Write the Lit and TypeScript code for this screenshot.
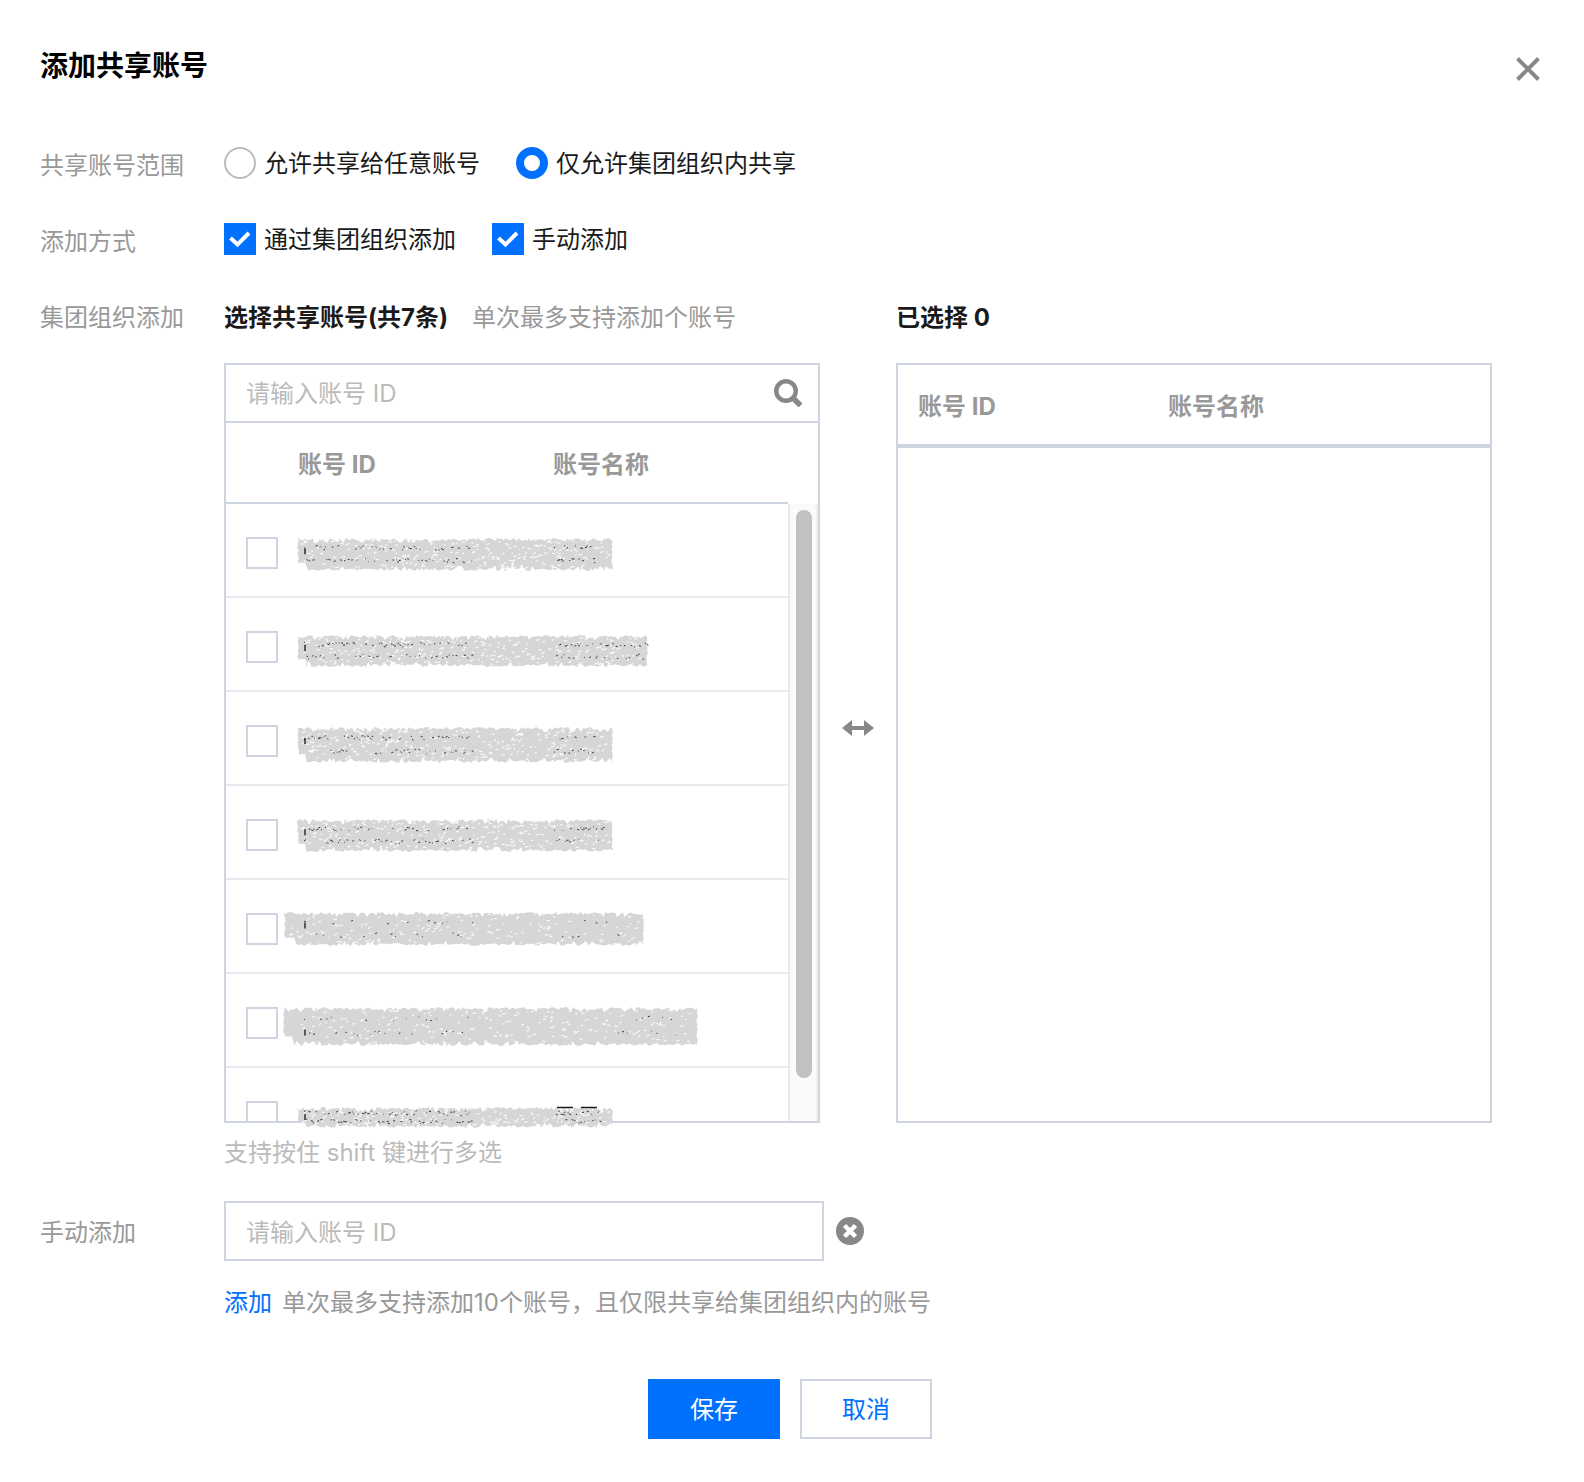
import { LitElement, html, css, svg } from "lit";
import { customElement } from "lit/decorators.js";

interface Smear {
  x: number;
  y: number;
  w: number;
  h: number;
  notch: number;
  nameFrom: number;
  nameTo: number;
  dark: number;
}

/* Geometry of the redaction strokes, relative to the source panel. */
const SMEARS: Smear[] = [
  { x: 73, y: 175, w: 316, h: 33, notch: 9, nameFrom: 330, nameTo: 372, dark: 1 },
  { x: 73, y: 272, w: 351, h: 32, notch: 9, nameFrom: 332, nameTo: 424, dark: 1 },
  { x: 73, y: 364, w: 316, h: 36, notch: 9, nameFrom: 330, nameTo: 370, dark: 1 },
  { x: 73, y: 456, w: 316, h: 33, notch: 9, nameFrom: 330, nameTo: 380, dark: 1 },
  { x: 60, y: 549, w: 360, h: 34, notch: 11, nameFrom: 338, nameTo: 402, dark: 0.3 },
  { x: 59, y: 644, w: 415, h: 39, notch: 10, nameFrom: 394, nameTo: 454, dark: 0.4 },
  { x: 73, y: 744, w: 316, h: 21, notch: 9, nameFrom: 332, nameTo: 376, dark: 1.2 },
];

function randomizer(seed: number) {
  let s = seed;
  return () => {
    s = (s * 1664525 + 1013904223) % 4294967296;
    return s / 4294967296;
  };
}

function smearOutline(m: Smear, rnd: () => number): string {
  const pts: string[] = [];
  const p = (x: number, y: number) => pts.push(`${x.toFixed(1)} ${y.toFixed(1)}`);
  const right = m.x + m.w;
  const bottom = m.y + m.h;
  const bite = () => (rnd() < 0.08 ? 5 : rnd() * 3);
  for (let x = m.x; x < right; x += 1 + rnd() * 2.5) p(x, m.y + bite());
  for (let y = m.y + 2; y < bottom; y += 2) p(right - rnd() * 1.6, y);
  for (let x = right; x > m.x + m.notch; x -= 1 + rnd() * 2.5) p(x, bottom - bite());
  p(m.x + m.notch - 1, bottom - m.h * 0.25);
  p(m.x + 2, bottom - m.h * 0.24);
  for (let y = bottom - m.h * 0.3; y > m.y; y -= 2) p(m.x + rnd() * 2, y);
  return `M${pts.join("L")}Z`;
}

function flecks(m: Smear, rnd: () => number): string {
  let d = "";
  const count = Math.round((m.w * m.h) / (m.dark < 1 ? 80 : 42));
  for (let i = 0; i < count; i++) {
    const x = m.x + 3 + rnd() * (m.w - 8);
    const y = m.y + 2 + rnd() * (m.h - 4);
    d += `M${x.toFixed(1)} ${y.toFixed(1)}l${(0.4 + rnd() * 2.4).toFixed(1)} ${(0.6 - rnd() * 2).toFixed(1)}`;
  }
  return d;
}

function traces(m: Smear, rnd: () => number): string {
  let d = "";
  const bands: [number, number][] = [
    [80, 248],
    [m.nameFrom, m.nameTo],
  ];
  for (const [from, to] of bands) {
    for (let x = from; x < to; x += (1 + rnd() * 3) / m.dark) {
      const y = m.y + m.h * (rnd() < 0.5 ? 0.3 : 0.68) + (rnd() - 0.5) * 4;
      d += `M${x.toFixed(1)} ${y.toFixed(1)}l${(0.5 + rnd() * 1.6).toFixed(1)} ${((rnd() - 0.5) * 2).toFixed(1)}`;
    }
  }
  return d;
}

const smearArt = SMEARS.map((m, i) => {
  const rnd = randomizer(97 + i * 31);
  const ty = m.y + m.h * (i === 5 ? 0.55 : 0.28);
  return svg`
    <path d=${smearOutline(m, rnd)} fill="#d6d6d6"></path>
    <path d=${flecks(m, rnd)} stroke="#f9f9f9" stroke-width="1.2" stroke-linecap="round"></path>
    <path d=${traces(m, rnd)} stroke="#333" stroke-width="1"></path>
    <path d=${`M81 ${ty + 1}v6`} stroke="#222" stroke-width="1.4"></path>
  `;
});

@customElement("app-root")
export class AppRoot extends LitElement {
  static styles = css`
    :host {
      display: block;
      background: #fff;
      color: #1a1a1a;
      font-family: Inter, "Noto Sans CJK SC", sans-serif;
      font-size: 24px;
      line-height: 36px;
    }
    * {
      box-sizing: border-box;
    }
    button,
    input {
      font: inherit;
      margin: 0;
    }
    .dialog {
      padding: 44px 44px 43px 40px;
    }
    .head {
      display: flex;
      align-items: center;
      justify-content: space-between;
      margin-bottom: 56px;
    }
    .title {
      margin: 0;
      color: #000;
      font-size: 28px;
      line-height: 44px;
      font-weight: 700;
    }
    .icon-button {
      display: flex;
      padding: 0;
      border: 0;
      background: none;
      color: #888;
      cursor: pointer;
    }
    .close {
      padding-top: 6px;
    }
    .icon {
      display: block;
      fill: none;
      stroke: currentColor;
    }
    .row {
      display: grid;
      grid-template-columns: 184px minmax(0, 1fr);
      margin: 0 0 36px;
    }
    .row.wide {
      margin-bottom: 30px;
    }
    .label {
      padding-top: 4px;
      color: #999;
    }
    .label.field {
      padding-top: 14px;
    }
    .options {
      display: flex;
      flex-wrap: wrap;
      gap: 36px;
    }
    .option {
      display: flex;
      align-items: flex-start;
      gap: 8px;
      line-height: 40px;
      cursor: pointer;
    }
    .option input {
      margin-top: 3px;
    }
    .tick,
    .radio {
      appearance: none;
      flex: none;
      display: block;
      width: 32px;
      height: 32px;
      background: #fff center / 100% no-repeat;
    }
    .radio {
      border: 2px solid #bbb;
      border-radius: 50%;
    }
    .radio:checked {
      border: 8px solid #0070ff;
    }
    .tick {
      border: 2px solid #cfd5e0;
    }
    .tick:checked {
      border: 0;
      background-color: #0070ff;
      background-image: url("data:image/svg+xml,%3Csvg xmlns='http://www.w3.org/2000/svg' viewBox='0 0 32 32'%3E%3Cpath d='M6.500 15l7 6.500L25 10' fill='none' stroke='white' stroke-width='4'/%3E%3C/svg%3E");
    }
    .transfer {
      display: grid;
      grid-template-columns: minmax(0, 1fr) 76px minmax(0, 1fr);
      padding-right: 48px;
    }
    .caption {
      display: flex;
      gap: 24px;
      padding: 4px 0 27px;
      white-space: nowrap;
    }
    .caption .note {
      color: #999;
    }
    .heading {
      margin: 0;
      font-size: 24px;
      font-weight: 700;
    }
    .swap {
      display: flex;
      align-items: center;
      justify-content: center;
      padding-top: 36px;
      color: #888;
    }
    .panel {
      position: relative;
      display: flex;
      flex-direction: column;
      height: 760px;
      border: 2px solid #cfd5e0;
    }
    .search {
      display: flex;
      align-items: center;
      flex: none;
      height: 58px;
      padding-right: 16px;
      border-bottom: 2px solid #cfd5e0;
    }
    .text {
      flex: 1;
      min-width: 0;
      padding: 2px 20px 0;
      border: 0;
      outline: 0;
      background: none;
      color: #1a1a1a;
    }
    .text::placeholder {
      color: #bbb;
      opacity: 1;
    }
    .list {
      display: flex;
      flex: 1;
      align-items: flex-start;
      min-height: 0;
      overflow: hidden;
    }
    .table {
      flex: 1;
      width: 100%;
      table-layout: fixed;
      border-spacing: 0;
    }
    .table th {
      height: 81px;
      padding: 5px 0 0;
      border-bottom: 2px solid #cfd5e0;
      color: #999;
      font-weight: 700;
      text-align: left;
    }
    .table td {
      height: 94px;
      padding: 6px 0 0;
      border-bottom: 2px solid #e6e9ee;
    }
    .table .pick {
      width: 72px;
      padding-left: 20px;
    }
    .table .id {
      width: 255px;
    }
    .table.target {
      flex: none;
    }
    .target th {
      border-bottom-width: 4px;
      height: 83px;
    }
    .target .id {
      width: 270px;
      padding-left: 20px;
    }
    .scrollbar {
      align-self: stretch;
      flex: none;
      width: 30px;
      margin-top: 81px;
      padding: 6px;
      border-left: 2px solid #e8e8e8;
      border-right: 2px solid #ededed;
      background: #fafafa;
    }
    .thumb {
      width: 16px;
      height: 568px;
      border-radius: 8px;
      background: #c1c1c1;
    }
    .smears {
      position: absolute;
      top: -2px;
      left: -2px;
      overflow: visible;
      pointer-events: none;
      fill: none;
    }
    .hint {
      margin: 0;
      padding-top: 12px;
      color: #bbb;
    }
    .manual {
      display: flex;
      align-items: center;
      gap: 12px;
    }
    .manual .text {
      flex: 0 1 600px;
      height: 60px;
      border: 2px solid #cfd5e0;
    }
    .tip {
      margin: 24px 0 0;
      color: #999;
    }
    .link {
      margin-right: 10px;
      color: #0070ff;
      text-decoration: none;
    }
    .foot {
      display: flex;
      justify-content: center;
      gap: 20px;
      padding-top: 22px;
    }
    .button {
      width: 132px;
      height: 60px;
      padding: 2px 0 0;
      border: 2px solid #cfd5e0;
      background: #fff;
      color: #0070ff;
      cursor: pointer;
    }
    .button.primary {
      border-color: #0070ff;
      background: #0070ff;
      color: #fff;
    }
  `;

  render() {
    return html`
      <main class="dialog" lang="zh-CN">
        <header class="head">
          <h1 class="title">添加共享账号</h1>
          <button class="icon-button close" aria-label="关闭">
            <svg class="icon" width="24" height="24" viewBox="0 0 24 24" stroke-width="4">
              <path d="M1.500 1.500l21 21M22.500 1.500l-21 21"></path>
            </svg>
          </button>
        </header>

        <div class="row" role="radiogroup" aria-labelledby="scope">
          <span class="label" id="scope">共享账号范围</span>
          <div class="options">
            <label class="option"><input class="radio" type="radio" name="scope" />允许共享给任意账号</label>
            <label class="option"><input class="radio" type="radio" name="scope" checked />仅允许集团组织内共享</label>
          </div>
        </div>

        <div class="row" role="group" aria-labelledby="method">
          <span class="label" id="method">添加方式</span>
          <div class="options">
            <label class="option"><input class="tick" type="checkbox" checked />通过集团组织添加</label>
            <label class="option"><input class="tick" type="checkbox" checked />手动添加</label>
          </div>
        </div>

        <div class="row wide">
          <span class="label">集团组织添加</span>
          <div>
            <div class="transfer">
              <section>
                <div class="caption">
                  <h2 class="heading">选择共享账号(共7条)</h2>
                  <span class="note">单次最多支持添加个账号</span>
                </div>
                <div class="panel">
                  <div class="search">
                    <input class="text" type="text" placeholder="请输入账号 ID" aria-label="请输入账号 ID" />
                    <button class="icon-button" aria-label="搜索">
                      <svg class="icon" width="28" height="28" viewBox="0 0 28 28" stroke-width="4.500">
                        <circle cx="12" cy="12" r="9.750"></circle>
                        <path d="M19 19l7.500 7.500" stroke-width="5.500"></path>
                      </svg>
                    </button>
                  </div>
                  <div class="list">
                    <table class="table">
                      <thead>
                        <tr>
                          <th class="pick"></th>
                          <th class="id">账号 ID</th>
                          <th>账号名称</th>
                        </tr>
                      </thead>
                      <tbody>
                        ${SMEARS.map(
                          (_, i) => html`<tr>
                            <td class="pick"><input class="tick" type="checkbox" aria-label=${`账号 ${i + 1}`} /></td>
                            <td></td>
                            <td></td>
                          </tr>`
                        )}
                      </tbody>
                    </table>
                    <div class="scrollbar"><div class="thumb"></div></div>
                  </div>
                  <svg class="smears" width="480" height="770" viewBox="0 0 480 770" aria-hidden="true">
                    ${smearArt}
                    <path d="M333 744.500h16M357 744.500h16" stroke="#1a1a1a" stroke-width="1.500"></path>
                  </svg>
                </div>
              </section>
              <div class="swap">
                <svg width="32" height="16" viewBox="0 0 32 16" fill="currentColor" aria-hidden="true">
                  <path d="M0 8L10 0v6h12V0l10 8-10 8v-6H10v6z"></path>
                </svg>
              </div>
              <section>
                <div class="caption"><h2 class="heading">已选择 0</h2></div>
                <div class="panel">
                  <table class="table target">
                    <thead>
                      <tr>
                        <th class="id">账号 ID</th>
                        <th>账号名称</th>
                      </tr>
                    </thead>
                  </table>
                </div>
              </section>
            </div>
            <p class="hint">支持按住 shift 键进行多选</p>
          </div>
        </div>

        <div class="row">
          <label class="label field" for="manual">手动添加</label>
          <div>
            <div class="manual">
              <input class="text" id="manual" type="text" placeholder="请输入账号 ID" />
              <button class="icon-button" aria-label="清除">
                <svg class="icon" width="28" height="28" viewBox="0 0 28 28">
                  <circle cx="14" cy="14" r="14" fill="#888" stroke="none"></circle>
                  <path d="M8.500 8.500l11 11M19.500 8.500l-11 11" stroke="#fff" stroke-width="4.500"></path>
                </svg>
              </button>
            </div>
            <p class="tip"><a class="link" href="#add">添加</a>单次最多支持添加10个账号，且仅限共享给集团组织内的账号</p>
          </div>
        </div>

        <footer class="foot">
          <button class="button primary">保存</button>
          <button class="button">取消</button>
        </footer>
      </main>
    `;
  }
}
